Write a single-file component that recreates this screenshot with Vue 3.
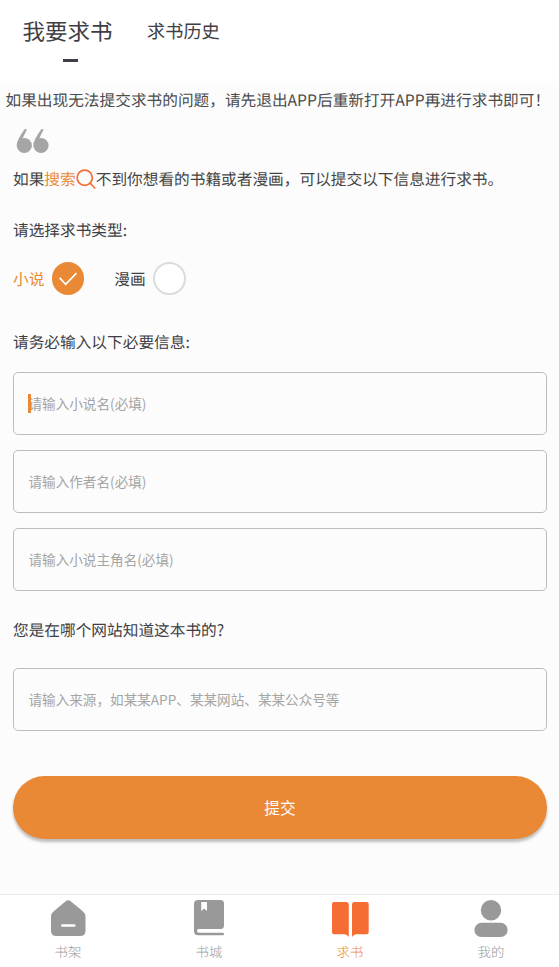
<script setup>
import { ref } from 'vue'

const kind = ref('novel')
const kinds = [
  { id: 'novel', label: '小说' },
  { id: 'comic', label: '漫画' },
]
const fields = [
  { id: 'title', hint: '请输入小说名(必填)' },
  { id: 'author', hint: '请输入作者名(必填)' },
  { id: 'hero', hint: '请输入小说主角名(必填)' },
]
const form = ref({ title: '', author: '', hero: '', source: '' })
</script>

<template>
  <div class="page">
    <header class="tabs">
      <div class="tab current">我要求书</div>
      <div class="tab">求书历史</div>
    </header>

    <p class="notice">如果出现无法提交求书的问题，请先退出APP后重新打开APP再进行求书即可！</p>

    <main class="content">
      <svg class="quote" viewBox="0 0 34 26">
        <circle cx="8.3" cy="17.5" r="7.6" />
        <circle cx="25" cy="17.5" r="7.6" />
        <path d="M.8 16.500C1.200 12.500 4.400 7.500 8.300 1.600Q9.300 .4 10.900 1.500L6 11.500Z" />
        <path d="M17.500 16.500C17.900 12.500 21.100 7.500 25 1.600Q26 .4 27.600 1.500L22.700 11.500Z" />
      </svg>

      <p class="intro">
        <span>如果</span><span class="link">搜索</span>
        <svg class="search" viewBox="0 0 20 20">
          <circle cx="8.700" cy="8.700" r="7.600" />
          <path d="M14 14L18.800 19" />
        </svg>
        <span>不到你想看的书籍或者漫画，可以提交以下信息进行求书。</span>
      </p>

      <h2 class="label type-label">请选择求书类型:</h2>
      <div class="kinds">
        <div
          v-for="k in kinds"
          :key="k.id"
          class="kind"
          :class="{ on: kind === k.id }"
          @click="kind = k.id"
        >
          <span>{{ k.label }}</span>
          <i class="radio">
            <svg v-if="kind === k.id" viewBox="0 0 32 32"><path d="M7.500 15.600L13.500 22L24 11" /></svg>
          </i>
        </div>
      </div>

      <h2 class="label info-label">请务必输入以下必要信息:</h2>
      <div class="fields">
        <div v-for="(f, i) in fields" :key="f.id" class="field">
          <input v-model="form[f.id]" :placeholder="f.hint" />
          <i v-if="i === 0" class="caret"></i>
        </div>
      </div>

      <h2 class="label source-label">您是在哪个网站知道这本书的?</h2>
      <div class="field">
        <input v-model="form.source" placeholder="请输入来源，如某某APP、某某网站、某某公众号等" />
      </div>

      <button class="submit">提交</button>
    </main>

    <nav class="bottom">
      <div class="item">
        <svg viewBox="0 0 40 40">
          <path d="M17.700 2.200Q20.200 .3 22.700 2.200L34.800 12.300Q37.500 14.500 37.500 17.500V31.500Q37.500 37 32 37H8.300Q3 37 3 31.500V17.500Q3 14.500 5.700 12.300Z" />
          <rect class="cut" x="13" y="25.300" width="14.500" height="2.400" rx="1.200" />
        </svg>
        <span>书架</span>
      </div>
      <div class="item">
        <svg viewBox="0 0 40 40">
          <path d="M9 1H31.500Q35 1 35 4.500V26.500Q35 30 31.500 30H9.500Q8 30 8 31.500Q8 33.800 10 33.800H34Q35 33.800 35 35T34 36.200H9Q5 36.200 5 32V5Q5 1 9 1Z" />
          <path class="cut" d="M12.300 3H18V12L15.150 9.500L12.300 12Z" />
        </svg>
        <span>书城</span>
      </div>
      <div class="item active">
        <svg viewBox="0 0 40 40">
          <path d="M4 3H16.500Q18.800 3 18.800 5.500V38Q17 35.300 14.500 35.300H4Q2 35.300 2 33.300V5Q2 3 4 3Z" />
          <path d="M24.200 3H36.700Q38.700 3 38.700 5V33.300Q38.700 35.300 36.700 35.300H26.200Q23.700 35.300 22 38V5.500Q22 3 24.200 3Z" />
        </svg>
        <span>求书</span>
      </div>
      <div class="item">
        <svg viewBox="0 0 40 40">
          <circle cx="20" cy="11.200" r="10.200" />
          <rect x="3.400" y="23.800" width="33.300" height="14.200" rx="7.100" />
        </svg>
        <span>我的</span>
      </div>
    </nav>
  </div>
</template>

<style>
body {
  margin: 0;
}
</style>

<style scoped>
.page {
  display: flex;
  flex-direction: column;
  box-sizing: border-box;
  width: 559px;
  height: 967px;
  overflow: hidden;
  background: #fcfcfc;
  color: #3f3e44;
  font-family: "Noto Sans CJK SC", sans-serif;
  font-size: 15.68px;
  line-height: 24px;
  text-rendering: geometricPrecision;
}
.tabs {
  display: flex;
  gap: 34.5px;
  height: 81px;
  padding-left: 22.5px;
  background: #fff;
}
.tab {
  display: flex;
  flex-direction: column;
  align-items: center;
  padding-top: 19px;
  font-size: 18.2px;
}
.tab.current {
  font-size: 22.5px;
}
.tab.current::after {
  content: "";
  width: 15px;
  height: 3px;
  margin-top: 16px;
  margin-left: 5px;
  background: #3f3e44;
}
.notice {
  margin: 7px 0 0 5.5px;
  color: #4c4c4c;
  white-space: nowrap;
}
.content {
  display: flex;
  flex-direction: column;
  flex: 1;
  padding: 0 12px 0 13px;
}
.quote {
  width: 34px;
  height: 26px;
  margin: 16px 0 0 3px;
  fill: #a5a5a5;
}
.intro {
  display: flex;
  align-items: center;
  margin: 13px 0 0;
  color: #444;
  white-space: nowrap;
}
.link {
  color: #ea8935;
}
.search {
  width: 20px;
  height: 20px;
  fill: none;
  stroke: #f66d34;
  stroke-width: 1.7;
  stroke-linecap: round;
}
.label {
  margin: 0;
  font-size: 15.68px;
  font-weight: 400;
}
.type-label {
  margin-top: 27px;
}
.kinds {
  display: flex;
  gap: 30px;
  margin-top: 20px;
}
.kind {
  display: flex;
  align-items: center;
  gap: 7.4px;
}
.kind.on {
  color: #ea8935;
}
.radio {
  box-sizing: border-box;
  width: 32.5px;
  height: 33px;
  border: 2px solid #dcdcdc;
  border-radius: 50%;
  background: #fff;
}
.on .radio {
  border: 0;
  background: #ea8935;
}
.radio svg {
  display: block;
  fill: none;
  stroke: #fff;
  stroke-width: 1.6;
}
.info-label {
  margin-top: 35px;
}
.fields {
  display: flex;
  flex-direction: column;
  gap: 15px;
  margin-top: 18px;
}
.field {
  position: relative;
  box-sizing: border-box;
  display: flex;
  height: 63px;
  border: 1px solid #bcbcbc;
  border-radius: 5px;
}
.field input {
  flex: 1;
  min-width: 0;
  padding: 0 15px 2px 14.5px;
  border: 0;
  outline: 0;
  background: none;
  color: #3f3e44;
  font-family: inherit;
  font-size: 13.6px;
}
.field input::placeholder {
  color: #a5a5a5;
}
.caret {
  position: absolute;
  top: 21px;
  left: 14px;
  width: 3px;
  height: 19px;
  background: #ea8935;
}
.source-label {
  margin: 27px 0 26px;
}
.submit {
  height: 63px;
  margin-top: 45px;
  padding: 0;
  border: 0;
  border-radius: 32px;
  background: #ea8935;
  box-shadow: 0 3px 3px rgba(0, 0, 0, 0.25);
  color: #fff;
  font-family: inherit;
  font-size: 15.68px;
}
.bottom {
  display: flex;
  justify-content: space-between;
  box-sizing: border-box;
  height: 73px;
  padding: 4px 48px 0;
  border-top: 1px solid #ececec;
  background: #fff;
  color: #999;
  font-size: 13.4px;
  font-weight: 300;
  line-height: 20px;
}
.item {
  display: flex;
  flex-direction: column;
  align-items: center;
  gap: 2px;
}
.item svg {
  width: 40px;
  height: 40px;
  fill: #999;
}
.item .cut {
  fill: #fff;
}
.item.active {
  color: #ea8935;
}
.item.active svg {
  fill: #f66d34;
}
</style>
